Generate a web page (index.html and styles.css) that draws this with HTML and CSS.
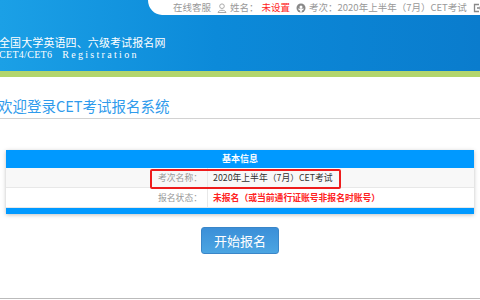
FILE: index.html
```html
<!DOCTYPE html>
<html lang="zh-CN">
<head>
    <meta charset="UTF-8">
    <title>全国大学英语四、六级考试报名网</title>
    <link rel="stylesheet" href="styles.css">
</head>
<body>
    <div class="header">
        <div class="topbar">
            <div class="tab">
                <span class="item">在线客服</span>
                <span class="item">
                    <svg class="icon" viewBox="0 0 10 10" width="10" height="10">
                        <circle cx="5" cy="3.2" r="2.3" fill="none" stroke="#aaa" stroke-width="1"/>
                        <path d="M1 9.5 C1.5 6.5 8.5 6.5 9 9.5 Z" fill="none" stroke="#aaa" stroke-width="1"/>
                    </svg>
                    姓名：<span class="red">未设置</span>
                </span>
                <span class="item">
                    <svg class="icon" viewBox="0 0 10 10" width="10" height="10">
                        <circle cx="5" cy="5" r="4.5" fill="#888"/>
                        <circle cx="5" cy="4" r="1.5" fill="#fff"/>
                        <path d="M4.3 5.3 H5.7 V9.5 H4.3 Z M2 6 L3 5.3 L5 7 L7 5.3 L8 6 L5 8.6 Z" fill="#fff"/>
                    </svg>
                    考次：2020年上半年（7月）CET考试
                </span>
                <span class="item">
                    <svg class="icon" viewBox="0 0 10 10" width="10" height="10">
                        <path d="M6 1.5 H1.5 V8.5 H6" fill="none" stroke="#888" stroke-width="1.3"/>
                        <path d="M4 5 H9 M7 3 L9 5 L7 7" fill="none" stroke="#888" stroke-width="1.3"/>
                    </svg>
                </span>
            </div>
        </div>
        <div class="logo">
            <div class="logo-cn">全国大学英语四、六级考试报名网</div>
            <div class="logo-en"><b>CET4/CET6</b><span>Registration</span></div>
        </div>
    </div>
    <div class="stripe"></div>

    <h1 class="title">欢迎登录CET考试报名系统</h1>

    <div class="content">
        <div class="info">
            <div class="info-head">基本信息</div>
            <div class="row odd">
                <div class="label">考次名称：</div>
                <div class="value">2020年上半年（7月）CET考试</div>
            </div>
            <div class="row">
                <div class="label">报名状态：</div>
                <div class="value red bold">未报名（或当前通行证账号非报名时账号）</div>
            </div>
            <div class="info-foot"></div>
            <div class="mark"></div>
        </div>

        <div class="actions">
            <button class="btn">开始报名</button>
        </div>
    </div>
    <div class="footer"></div>
</body>
</html>
```

FILE: styles.css
```css
body {
    margin: 0;
    width: 480px;
    height: 300px;
    overflow: hidden;
    background-color: #ffffff;
    font-family: "Noto Sans CJK SC", "Noto Sans", sans-serif;
    color: #333;
}
.header {
    height: 71px;
    background: linear-gradient(to right, #1ba0e6 0%, #0c8ad9 45%, #0a7ccd 100%);
    display: flex;
    flex-direction: column;
}
.topbar {
    display: flex;
    justify-content: flex-end;
}
.tab {
    width: 332px;
    height: 15px;
    background-color: #ffffff;
    border-bottom-left-radius: 14px 15px;
    display: flex;
    align-items: center;
    padding-left: 25px;
    box-sizing: border-box;
    font-size: 9.5px;
    color: #999;
    white-space: nowrap;
    gap: 6px;
}
.tab .item {
    display: flex;
    align-items: center;
    gap: 3px;
    line-height: 15px;
}
.icon {
    display: block;
    flex: none;
}
.red {
    color: #ff2222;
}
.bold {
    font-weight: bold;
}
.logo {
    color: #ffffff;
    padding-top: 21px;
    margin-left: -1px;
}
.logo-cn {
    font-size: 11px;
    line-height: 13px;
    letter-spacing: 0.1px;
}
.logo-en {
    font-family: "Liberation Serif", serif;
    font-size: 10px;
    line-height: 11px;
    white-space: nowrap;
}
.logo-en b {
    font-weight: normal;
    letter-spacing: 0.3px;
}
.logo-en span {
    margin-left: 10px;
    letter-spacing: 2.3px;
}
.stripe {
    height: 6px;
    background-color: #b3d56c;
}
.title {
    margin: 0;
    padding-top: 17px;
    height: 24px;
    font-size: 14.5px;
    line-height: 24px;
    font-weight: normal;
    color: #2f9bec;
    border-bottom: 1px solid #d2d2d2;
    white-space: nowrap;
    text-indent: -2px;
}
.content {
    padding: 31px 6px 0;
}
.info {
    position: relative;
    width: 468px;
    box-shadow: 0 1px 4px rgba(0, 0, 0, 0.25);
    font-size: 8.8px;
}
.info-head {
    height: 18px;
    line-height: 18px;
    background-color: #0099ff;
    color: #ffffff;
    font-weight: bold;
    text-align: center;
    font-size: 9px;
}
.row {
    display: flex;
    height: 19px;
    line-height: 19px;
    border-bottom: 1px solid #e8e8e8;
    background-color: #ffffff;
}
.row.odd {
    background-color: #f8f8f8;
}
.label {
    width: 196px;
    padding-right: 5px;
    text-align: right;
    color: #999;
    border-right: 1px solid #e8e8e8;
    flex: none;
}
.value {
    padding-left: 5px;
    white-space: nowrap;
}
.info-foot {
    height: 6px;
    background-color: #0099ff;
}
.mark {
    position: absolute;
    left: 144px;
    top: 19px;
    width: 187px;
    height: 16px;
    border: 2px solid #ee1c1c;
    border-radius: 2px;
}
.actions {
    display: flex;
    justify-content: center;
    padding-top: 13px;
}
.btn {
    width: 78px;
    height: 27px;
    border: 1px solid #3a86c8;
    border-radius: 3px;
    background: linear-gradient(to bottom, #3b8fd8, #4ba5e2);
    color: #ffffff;
    font-family: "Noto Sans CJK SC", sans-serif;
    font-size: 13px;
    cursor: pointer;
}
.footer {
    margin-top: 44px;
    border-top: 1px solid #bbbbbb;
}
```
